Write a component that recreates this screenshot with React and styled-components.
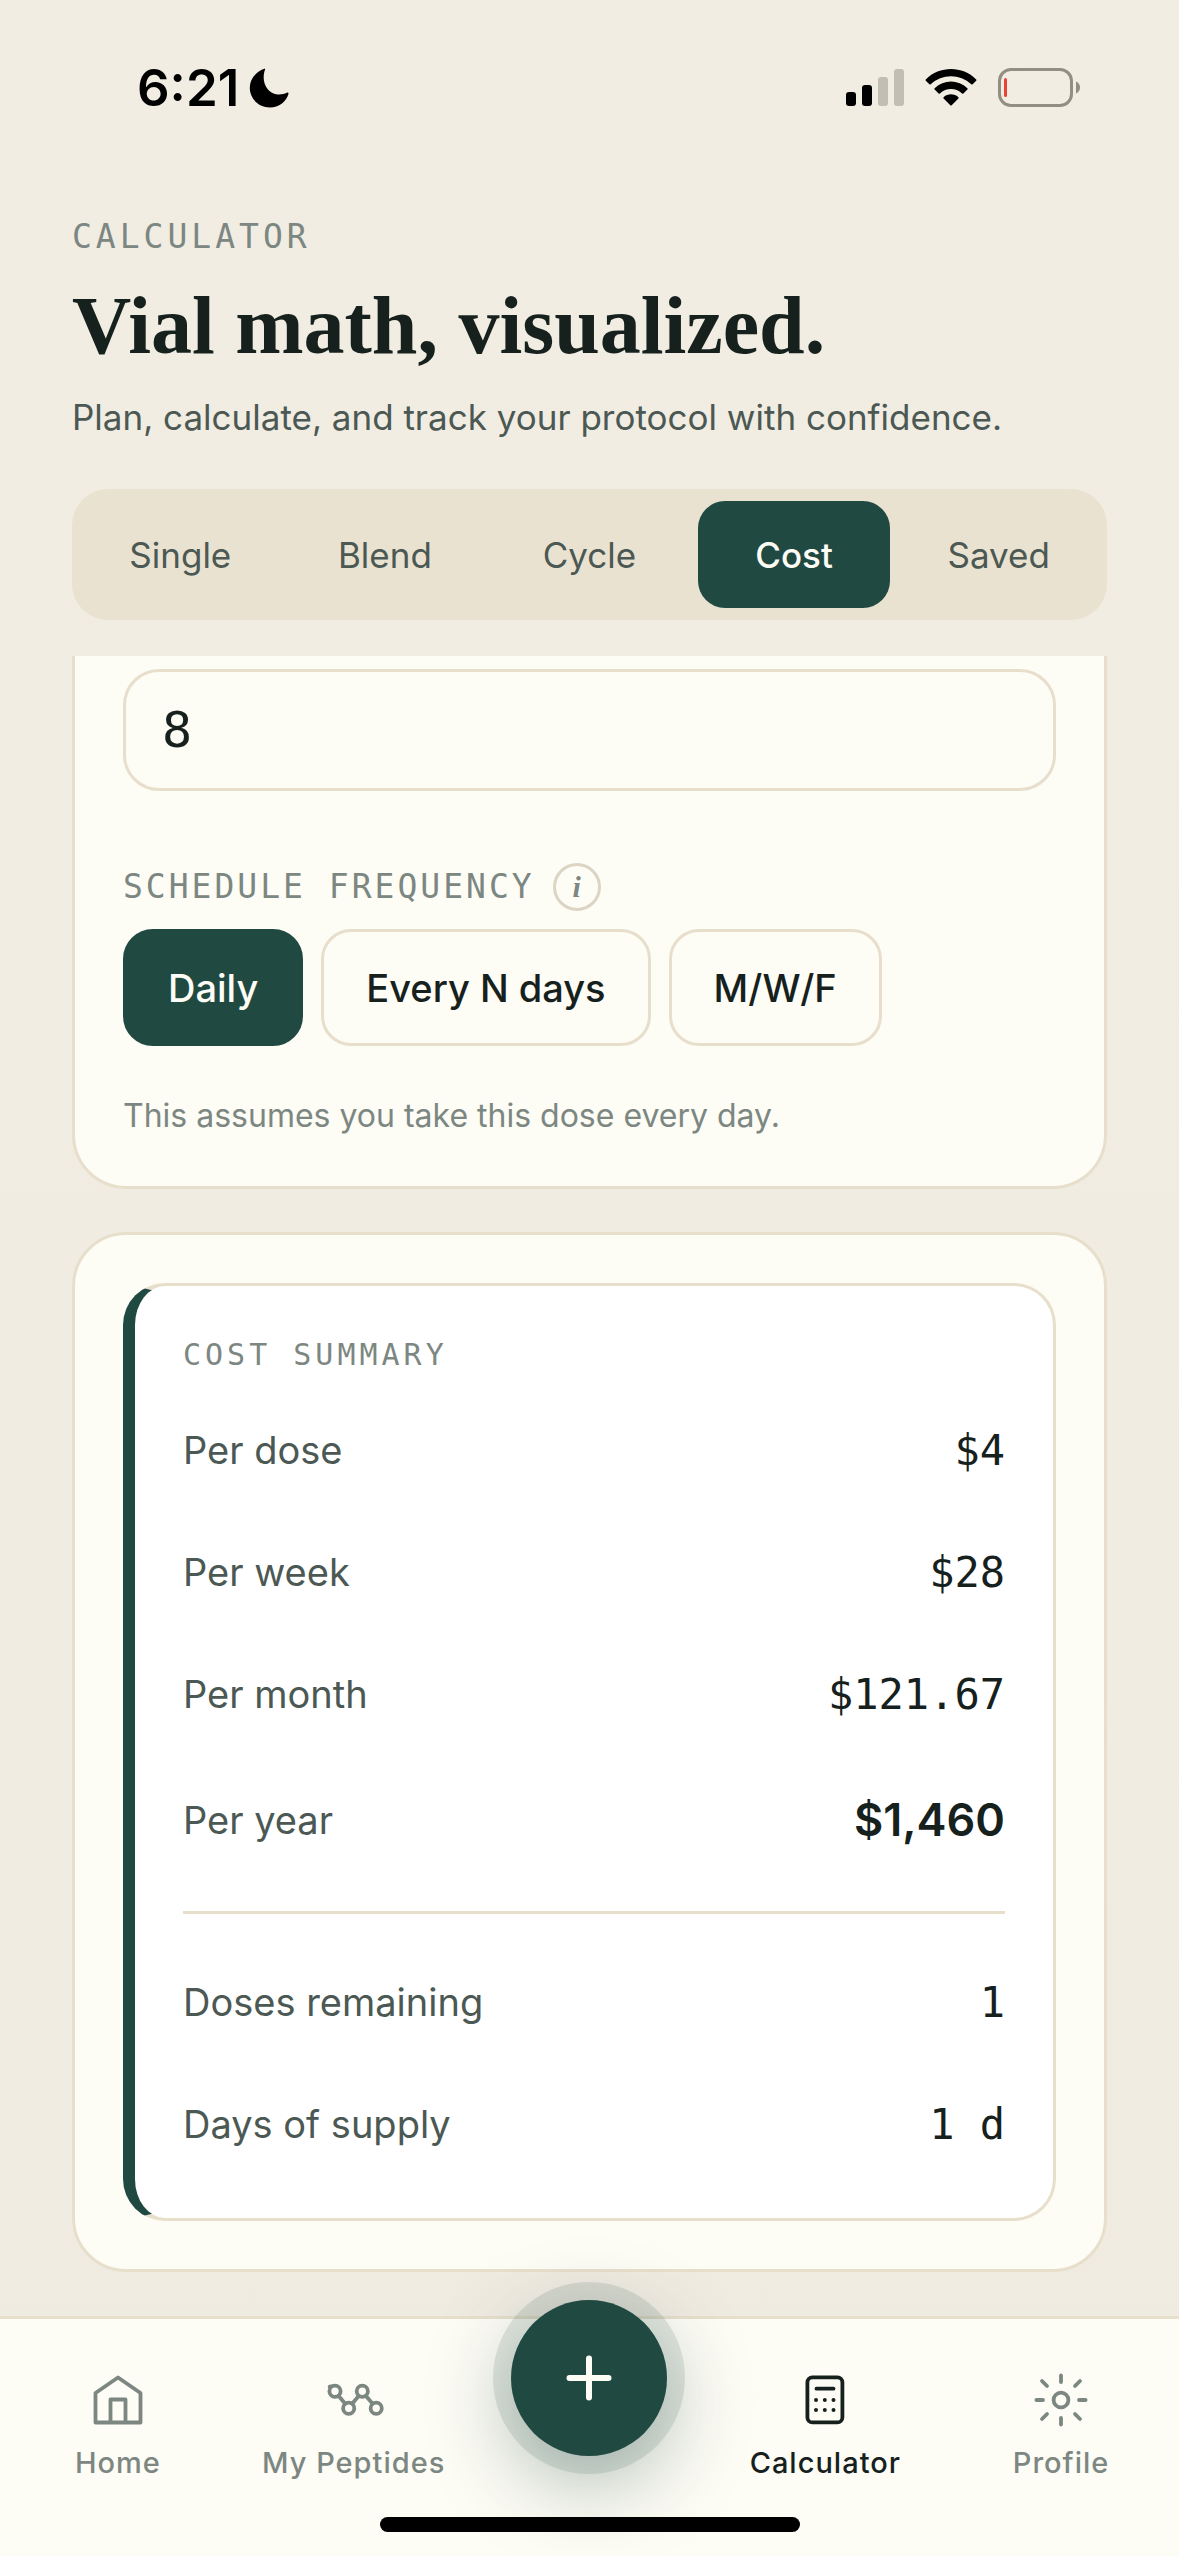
import { useState } from "react";
import styled, { createGlobalStyle } from "styled-components";

const sans = `Inter, "Open Sans", sans-serif`;
const mono = `"DejaVu Sans Mono", "Liberation Mono", monospace`;
const serif = `"Liberation Serif", "DejaVu Serif", serif`;

const GlobalStyle = createGlobalStyle`
  * {
    box-sizing: border-box;
  }

  body {
    margin: 0;
    background: #f1ece1;
    color: #16211e;
    font-family: ${sans};
  }
`;

//Css for the page shell
const Screen = styled.div`
  min-height: 100vh;
  display: flex;
  flex-direction: column;
  background: linear-gradient(#f2ede2, #f0ebe1);
`;

const StatusBar = styled.div`
  display: flex;
  justify-content: space-between;
  align-items: center;
  height: 116px;
  padding: 60px 97px 0 137px;
  color: #000000;
`;

const StatusGroup = styled.div`
  display: flex;
  align-items: center;
  gap: ${({ $gap }) => $gap}px;
`;

const Time = styled.span`
  font-size: 51px;
  line-height: 56px;
  font-weight: 600;
`;

const Header = styled.header`
  display: flex;
  flex-direction: column;
  padding: 100px 72px 36px;
`;

const Eyebrow = styled.p`
  margin: 0 0 20px;
  font-family: ${mono};
  font-size: 33px;
  line-height: 42px;
  letter-spacing: 4px;
  text-transform: uppercase;
  color: #7c8782;
`;

const Title = styled.h1`
  margin: 0 0 16px;
  font-family: ${serif};
  font-size: 82px;
  line-height: 96px;
  font-weight: 700;
`;

const Subtitle = styled.p`
  margin: 0 0 45px;
  font-size: 35px;
  line-height: 54px;
  color: #4b5853;
`;

const Tabs = styled.div`
  display: grid;
  grid-template-columns: repeat(5, 1fr);
  gap: 12px;
  padding: 12px;
  border-radius: 36px;
  background: #eae2d0;
`;

const Tab = styled.button`
  height: 107px;
  padding: 0;
  border: 0;
  border-radius: 27px;
  background: ${({ $active }) => ($active ? "#204942" : "transparent")};
  color: ${({ $active }) => ($active ? "#fdfcf5" : "#4b5853")};
  font-family: ${sans};
  font-size: 35px;
  font-weight: ${({ $active }) => ($active ? 500 : 400)};
`;
//End Css

//Css for the cards
const Main = styled.main`
  flex: 1;
  display: flex;
  flex-direction: column;
  gap: 43px;
  padding: 0 72px 43px;
`;

const FormCard = styled.section`
  display: flex;
  flex-direction: column;
  padding: 13px 48px 46px;
  border: 3px solid #e7dfcc;
  border-top: 0;
  border-radius: 0 0 54px 54px;
  background: #fdfcf5;
`;

const NumberInput = styled.input`
  width: 100%;
  height: 122px;
  padding: 0 36px;
  border: 3px solid #e7dfcc;
  border-radius: 36px;
  background: transparent;
  color: #16211e;
  font-family: ${mono};
  font-size: 50px;
`;

const FieldHeader = styled.div`
  display: flex;
  align-items: center;
  gap: 18px;
  margin: 72px 0 18px;
`;

const FieldLabel = styled.span`
  font-family: ${mono};
  font-size: 33px;
  line-height: 48px;
  letter-spacing: 3px;
  text-transform: uppercase;
  color: #7c8782;
`;

const InfoButton = styled.button`
  width: 48px;
  height: 48px;
  padding: 0;
  border: 3px solid #ddd5c3;
  border-radius: 50%;
  background: transparent;
  color: #7c8782;
  font-family: ${serif};
  font-size: 30px;
  line-height: 30px;
  font-style: italic;
  font-weight: 700;
`;

const Pills = styled.div`
  display: flex;
  gap: 18px;
`;

const Pill = styled.button`
  height: 117px;
  padding: 0 42px;
  border: 3px solid ${({ $active }) => ($active ? "#204942" : "#e7dfcc")};
  border-radius: 30px;
  background: ${({ $active }) => ($active ? "#204942" : "transparent")};
  color: ${({ $active }) => ($active ? "#fdfcf5" : "#16211e")};
  font-family: ${sans};
  font-size: 38px;
  font-weight: 500;
`;

const Hint = styled.p`
  margin: 46px 0 0;
  font-size: 32px;
  line-height: 48px;
  color: #7c8782;
`;

const SummaryCard = styled.section`
  padding: 48px;
  border: 3px solid #e7dfcc;
  border-radius: 54px;
  background: #fdfcf5;
`;

const Summary = styled.div`
  display: flex;
  flex-direction: column;
  gap: 30px;
  padding: 50px 48px 48px;
  border: 3px solid #e7dfcc;
  border-left: 12px solid #204942;
  border-radius: 42px;
  background: #ffffff;
`;

const SummaryTitle = styled.h2`
  margin: 0;
  font-family: ${mono};
  font-size: 30px;
  line-height: 38px;
  font-weight: 400;
  letter-spacing: 4px;
  text-transform: uppercase;
  color: #7c8782;
`;

const Rows = styled.dl`
  display: flex;
  flex-direction: column;
  gap: 30px;
  margin: 0;
`;

const Row = styled.div`
  display: flex;
  justify-content: space-between;
  align-items: center;
  min-height: ${({ $strong }) => ($strong ? 99 : 92)}px;
`;

const RowLabel = styled.dt`
  font-size: 38px;
  line-height: 48px;
  color: #4b5853;
`;

const RowValue = styled.dd`
  margin: 0;
  font-family: ${({ $strong }) => ($strong ? sans : mono)};
  font-size: ${({ $strong }) => ($strong ? 45 : 42)}px;
  font-weight: ${({ $strong }) => ($strong ? 600 : 400)};
`;

const Divider = styled.hr`
  width: 100%;
  height: 3px;
  margin: 12px 0;
  border: 0;
  background: #e7dfcc;
`;
//End Css

//Css for the bottom navigation
const BottomBar = styled.footer`
  position: sticky;
  bottom: 0;
  display: flex;
  flex-direction: column;
  align-items: center;
  padding-bottom: 24px;
  border-top: 3px solid #e7dfcc;
  background: #fdfcf5;
`;

const NavGrid = styled.nav`
  display: grid;
  grid-template-columns: repeat(5, 1fr);
  justify-items: center;
  align-items: start;
  width: 100%;
  height: 198px;
`;

const NavLink = styled.a`
  display: flex;
  flex-direction: column;
  align-items: center;
  gap: 12px;
  padding-top: 48px;
  color: ${({ $active }) => ($active ? "#16211e" : "#7c8782")};
  font-size: 29px;
  line-height: 36px;
  font-weight: 500;
  letter-spacing: 1px;
  text-decoration: none;
  white-space: nowrap;
`;

const NavIcon = styled.svg`
  width: 66px;
  height: 66px;
  fill: none;
  stroke: currentColor;
  stroke-width: 3.8;
  stroke-linecap: round;
  stroke-linejoin: round;
`;

const AddButton = styled.button`
  display: grid;
  place-items: center;
  width: 156px;
  height: 156px;
  margin-top: -19px;
  padding: 0;
  border: 0;
  border-radius: 50%;
  background: #204942;
  box-shadow:
    0 0 0 18px rgba(32, 73, 66, 0.12),
    0 24px 84px rgba(32, 73, 66, 0.38);
`;

const HomeIndicator = styled.div`
  width: 420px;
  height: 15px;
  border-radius: 8px;
  background: #000000;
`;
//End Css

const tabs = ["Single", "Blend", "Cycle", "Cost", "Saved"];
const frequencies = ["Daily", "Every N days", "M/W/F"];

const costs = [
  { label: "Per dose", value: "$4" },
  { label: "Per week", value: "$28" },
  { label: "Per month", value: "$121.67" },
  { label: "Per year", value: "$1,460", strong: true },
];

const supply = [
  { label: "Doses remaining", value: "1" },
  { label: "Days of supply", value: "1 d" },
];

function MoonIcon() {
  return (
    <svg width="40" height="40" viewBox="0 0 40 40" aria-hidden="true">
      <path
        d="M15.2 .8C16 .4 16.4 .8 16 1.8C14.6 5.4 14.4 9.6 15 13C16.6 21.4 22.6 26.6 30 26.4C33 26.4 35.6 25.8 37.8 24.8C39 24.2 39.8 24.8 39.4 26.2C37 34 30 39.4 21 39.4C9.6 39.4 .8 30.8 .8 19.6C.8 11 6.6 4 15.2 .8Z"
        fill="#000"
      />
    </svg>
  );
}

function SignalIcon() {
  return (
    <svg width="58" height="38" viewBox="0 0 58 38" aria-hidden="true">
      <rect x="0" y="23" width="10" height="14" rx="3" />
      <rect x="16" y="16" width="10" height="21" rx="3" />
      <rect x="32" y="8" width="10" height="29" rx="3" fill="#c2beb4" />
      <rect x="48" y="0" width="10" height="37" rx="3" fill="#c2beb4" />
    </svg>
  );
}

function WifiIcon() {
  return (
    <svg width="52" height="38" viewBox="0 0 52 38" aria-hidden="true">
      <path d="M.8 10.4C14.6-3.4 37.4-3.4 51.2 10.4C51.6 10.8 51.6 11.3 51.2 11.7L47.6 15.3C47.2 15.7 46.7 15.7 46.3 15.3C35 4.6 17 4.6 5.7 15.3C5.3 15.7 4.8 15.7 4.4 15.3L.8 11.7C.4 11.3 .4 10.8 .8 10.4Z" />
      <path d="M9.6 19.2C18.8 10.4 33.2 10.4 42.4 19.2C42.8 19.6 42.8 20.2 42.4 20.6L38.4 24.4C38 24.8 37.5 24.8 37.1 24.4C30.8 18.6 21.2 18.6 14.9 24.4C14.5 24.8 14 24.8 13.6 24.4L9.6 20.6C9.2 20.2 9.2 19.6 9.6 19.2Z" />
      <path d="M18.6 28.2C22.8 24.4 29.2 24.4 33.4 28.2C33.8 28.6 33.8 29.1 33.4 29.5L26.7 36.3C26.3 36.7 25.7 36.7 25.3 36.3L18.6 29.5C18.2 29.1 18.2 28.6 18.6 28.2Z" />
    </svg>
  );
}

function BatteryIcon() {
  return (
    <svg width="84" height="40" viewBox="0 0 84 40" aria-hidden="true">
      <rect x="1.5" y="1.5" width="72" height="36" rx="11.5" fill="none" stroke="#928e82" strokeWidth="3" />
      <path d="M78 13.5C80.6 14.6 82 16.8 82 19.5C82 22.2 80.6 24.4 78 25.5Z" fill="#928e82" />
      <rect x="6" y="10" width="3" height="19" rx="1.5" fill="#ea4335" />
    </svg>
  );
}

function HomeIcon() {
  return (
    <NavIcon viewBox="0 0 66 66" aria-hidden="true">
      <path d="M10.5 26L33 10.5L55.5 26V55.5H10.5Z" />
      <path d="M25.5 55V32.5H40.5V55" />
    </NavIcon>
  );
}

function PeptideIcon() {
  return (
    <NavIcon viewBox="0 0 66 66" aria-hidden="true">
      <circle cx="14" cy="24.3" r="5.6" />
      <circle cx="27.7" cy="41.3" r="5.6" />
      <circle cx="41.3" cy="24.3" r="5.6" />
      <circle cx="55.2" cy="41.3" r="5.6" />
      <path d="M8.6 19.6L10.4 19.4M17.5 28.8L24.2 36.8M31.2 36.8L37.8 28.8M44.8 28.8L51.6 36.8" />
    </NavIcon>
  );
}

function CalculatorIcon() {
  return (
    <NavIcon viewBox="0 0 66 66" aria-hidden="true">
      <rect x="15.4" y="10.4" width="35" height="45" rx="5" />
      <path d="M24.5 21.7H41.5" />
      <g fill="currentColor" stroke="none">
        <circle cx="24" cy="33" r="2" />
        <circle cx="32.8" cy="33" r="2" />
        <circle cx="41.5" cy="33" r="2" />
        <circle cx="24" cy="43" r="2" />
        <circle cx="32.8" cy="43" r="2" />
        <circle cx="41.5" cy="43" r="2" />
      </g>
    </NavIcon>
  );
}

function ProfileIcon() {
  return (
    <NavIcon viewBox="0 0 66 66" aria-hidden="true">
      <circle cx="33" cy="33" r="7.4" />
      <path d="M33 8.4V15M33 51V57.6M8.4 33H15M51 33H57.6M14 14L19 19M47 47L52 52M14 52L19 47M47 19L52 14" />
    </NavIcon>
  );
}

function CostRow({ label, value, strong }) {
  return (
    <Row $strong={strong}>
      <RowLabel>{label}</RowLabel>
      <RowValue $strong={strong}>{value}</RowValue>
    </Row>
  );
}

/**
 * Render the cost tab of the calculator
 */
function App() {
  const [tab, setTab] = useState("Cost");
  const [frequency, setFrequency] = useState("Daily");
  const [amount, setAmount] = useState("8");

  return (
    <Screen>
      <GlobalStyle />
      <StatusBar>
        <StatusGroup $gap={10}>
          <Time>6:21</Time>
          <MoonIcon />
        </StatusGroup>
        <StatusGroup $gap={21}>
          <SignalIcon />
          <WifiIcon />
          <BatteryIcon />
        </StatusGroup>
      </StatusBar>

      <Header>
        <Eyebrow>Calculator</Eyebrow>
        <Title>Vial math, visualized.</Title>
        <Subtitle>Plan, calculate, and track your protocol with confidence.</Subtitle>
        <Tabs role="tablist">
          {tabs.map((name) => (
            <Tab
              key={name}
              type="button"
              role="tab"
              aria-selected={tab === name}
              $active={tab === name}
              onClick={() => setTab(name)}
            >
              {name}
            </Tab>
          ))}
        </Tabs>
      </Header>

      <Main>
        <FormCard>
          <NumberInput
            aria-label="Amount"
            inputMode="numeric"
            value={amount}
            onChange={(e) => setAmount(e.target.value)}
          />
          <FieldHeader>
            <FieldLabel id="frequency">Schedule frequency</FieldLabel>
            <InfoButton type="button" aria-label="About schedule frequency">
              i
            </InfoButton>
          </FieldHeader>
          <Pills role="group" aria-labelledby="frequency">
            {frequencies.map((name) => (
              <Pill
                key={name}
                type="button"
                aria-pressed={frequency === name}
                $active={frequency === name}
                onClick={() => setFrequency(name)}
              >
                {name}
              </Pill>
            ))}
          </Pills>
          <Hint>This assumes you take this dose every day.</Hint>
        </FormCard>

        <SummaryCard>
          <Summary>
            <SummaryTitle>Cost summary</SummaryTitle>
            <Rows>
              {costs.map((row) => (
                <CostRow key={row.label} {...row} />
              ))}
            </Rows>
            <Divider />
            <Rows>
              {supply.map((row) => (
                <CostRow key={row.label} {...row} />
              ))}
            </Rows>
          </Summary>
        </SummaryCard>
      </Main>

      <BottomBar>
        <NavGrid>
          <NavLink href="#home">
            <HomeIcon />
            Home
          </NavLink>
          <NavLink href="#peptides">
            <PeptideIcon />
            My Peptides
          </NavLink>
          <AddButton type="button" aria-label="Add">
            <svg width="46" height="46" viewBox="0 0 46 46" aria-hidden="true">
              <path d="M23 3.5V42.5M3.5 23H42.5" stroke="#fdfcf5" strokeWidth="6" strokeLinecap="round" />
            </svg>
          </AddButton>
          <NavLink href="#calculator" $active>
            <CalculatorIcon />
            Calculator
          </NavLink>
          <NavLink href="#profile">
            <ProfileIcon />
            Profile
          </NavLink>
        </NavGrid>
        <HomeIndicator />
      </BottomBar>
    </Screen>
  );
}

export default App;
